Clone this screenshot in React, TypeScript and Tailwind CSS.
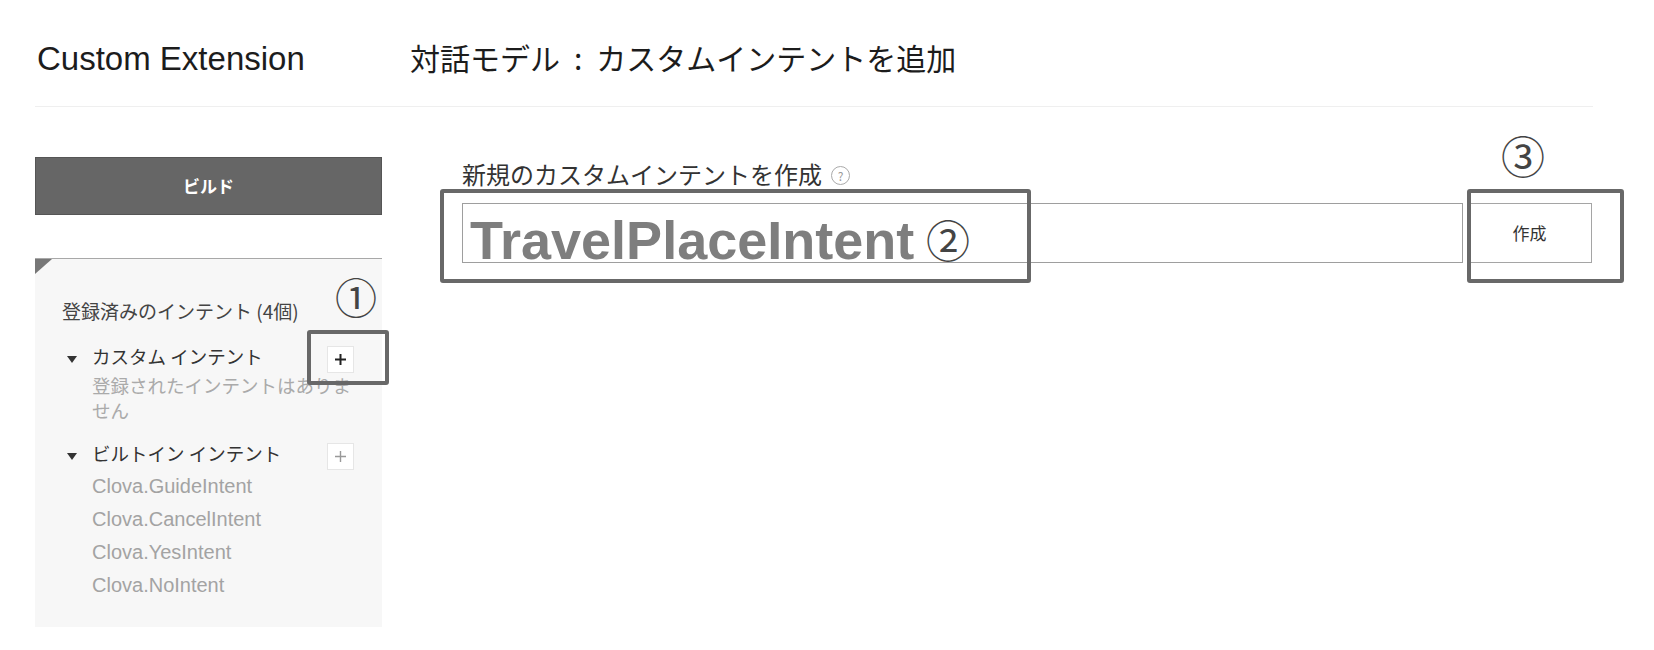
import React from 'react'

const cjk = "font-['Noto_Sans_CJK_JP','Noto_Sans',sans-serif]"
const latin = "font-['Liberation_Sans','Noto_Sans_CJK_JP',sans-serif]"

const Caret = () => (
  <svg width="10" height="7" viewBox="0 0 10 7" className="shrink-0">
    <polygon points="0,0 10,0 5,7" fill="#333" />
  </svg>
)

const PlusBox = ({ dark }: { dark?: boolean }) => (
  <div className="w-[27px] h-[27px] bg-white border border-[#e6e6e6] flex items-center justify-center">
    <svg width="13" height="13" viewBox="0 0 13 13">
      <path d="M6.5 1v11M1 6.5h11" stroke={dark ? '#222' : '#999'} strokeWidth={dark ? 2 : 1.4} />
    </svg>
  </div>
)

const Marker = ({ className }: { className: string }) => (
  <div className={`absolute border-[4px] border-[#686868] rounded-[3px] pointer-events-none ${className}`} />
)

const builtins = ['Clova.GuideIntent', 'Clova.CancelIntent', 'Clova.YesIntent', 'Clova.NoIntent']

export default function App() {
  return (
    <div className="w-[1654px] h-[650px] bg-white overflow-hidden px-[35px] pt-[42px]">
      <header className="flex items-start h-[33px]">
        <h1 className={`w-[375px] pl-[2px] text-[33px] leading-[33px] text-[#1c1c1c] ${latin}`}>Custom Extension</h1>
        <h2 className={`text-[30px] leading-[30px] text-[#1c1c1c] ${cjk}`}>
          対話モデル<span className="mx-[14px]">:</span>カスタムインテントを追加
        </h2>
      </header>
      <div className="mt-[31px] h-px w-[1558px] bg-[#efefef]" />

      <div className="flex">
        <aside className="w-[347px] pt-[50px] shrink-0">
          <button className={`w-full h-[58px] bg-[#666] border border-[#555] text-white text-[17px] font-semibold ${cjk}`}>
            ビルド
          </button>

          <div className={`relative mt-[43px] h-[369px] bg-[#f7f7f7] border-t border-[#a8a8a8] pt-[40px] ${cjk}`}>
            <svg width="17" height="15" viewBox="0 0 17 15" className="absolute top-0 left-0">
              <polygon points="0,0 17,0 0,15" fill="#777" />
            </svg>

            <div className="pl-[27px] text-[19px] leading-[24px] text-[#444]">登録済みのインテント (4個)</div>

            <div className="mt-[23px] h-[27px] flex items-center justify-between pl-[32px] pr-[28px]">
              <div className="flex items-center gap-[15px] text-[18.5px] text-[#333]">
                <Caret />
                <span className="pb-[5px]">カスタム インテント</span>
              </div>
              <PlusBox dark />
            </div>
            <div className="pl-[57px] pr-[26px] text-[18.5px] leading-[25px] text-[#aaa]">
              登録されたインテントはありません
            </div>

            <div className="mt-[20px] h-[27px] flex items-center justify-between pl-[32px] pr-[28px]">
              <div className="flex items-center gap-[15px] text-[18.5px] text-[#333]">
                <Caret />
                <span className="pb-[5px]">ビルトイン インテント</span>
              </div>
              <PlusBox />
            </div>
            <ul className={`pl-[57px] text-[20px] leading-[33px] text-[#a3a3a3] ${latin}`}>
              {builtins.map(b => (
                <li key={b}>{b}</li>
              ))}
            </ul>

            <span className="absolute left-[300px] top-[16px] text-[42px] leading-[42px] text-[#444]">①</span>
            <Marker className="left-[272px] top-[71px] w-[82px] h-[55px]" />
          </div>
        </aside>

        <main className={`ml-[80px] w-[1131px] pt-[55px] ${cjk}`}>
          <div className="flex items-center gap-[9px] h-[24px]">
            <span className="text-[24px] leading-[24px] text-[#333]">新規のカスタムインテントを作成</span>
            <span className="w-[19px] h-[19px] mt-[3px] rounded-full border border-[#aaa] text-[#999] text-[12px] leading-none flex items-center justify-center">
              ?
            </span>
          </div>

          <div className="relative mt-[17px] flex gap-[4px] h-[60px]">
            <div className="w-[1001px] h-[60px] border border-[#9e9e9e] bg-white pl-[7px] pt-[9px]">
              <span className={`text-[54px] leading-[54px] font-bold text-[#7e7e7e] ${latin}`}>TravelPlaceIntent</span>
            </div>
            <button className="w-[125px] h-[60px] border border-[#a5a5a5] bg-white text-[17px] text-[#333]">作成</button>

            <span className="absolute left-[464px] top-[14px] text-[44px] leading-[44px] text-[#444]">②</span>
            <span className="absolute left-[1039px] top-[-70px] text-[44px] leading-[44px] text-[#444]">③</span>
            <Marker className="left-[-22px] top-[-14px] w-[591px] h-[94px]" />
            <Marker className="left-[1005px] top-[-14px] w-[157px] h-[94px]" />
          </div>
        </main>
      </div>
    </div>
  )
}
